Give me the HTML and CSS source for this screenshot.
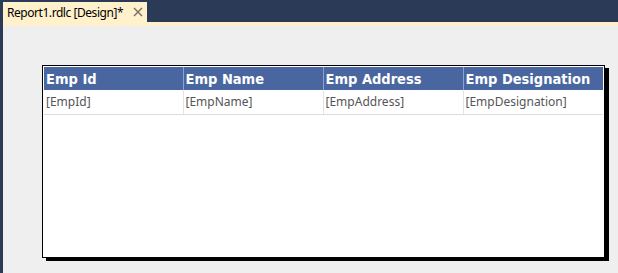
FILE: index.html
```html
<!DOCTYPE html>
<html lang="en">
  <head>
    <meta charset="UTF-8" />
    <meta name="viewport" content="width=device-width, initial-scale=1.0" />
    <title>Report1.rdlc [Design]</title>
    <link rel="stylesheet" href="styles.css">
  </head>
  <body>
    <div class="window">
      <div class="tabstrip">
        <div class="tab">
          <span class="tab-title">Report1.rdlc [Design]*</span>
          <svg class="tab-close" width="10" height="10" viewBox="0 0 10 10">
            <path d="M1 1 L9 9 M9 1 L1 9" stroke="#7b7563" stroke-width="1.5" fill="none" />
          </svg>
        </div>
      </div>

      <div class="designer">
        <div class="report-body">
          <table class="report-table">
            <tr class="head">
              <th>Emp Id</th>
              <th>Emp Name</th>
              <th>Emp Address</th>
              <th>Emp Designation</th>
            </tr>
            <tr class="detail">
              <td>[EmpId]</td>
              <td>[EmpName]</td>
              <td>[EmpAddress]</td>
              <td>[EmpDesignation]</td>
            </tr>
          </table>
        </div>
      </div>
    </div>
  </body>
</html>
```

FILE: styles.css
```css
* {
  margin: 0;
  padding: 0;
  box-sizing: border-box;
}
body {
  font-family: "Noto Sans", "Open Sans", sans-serif;
  background-color: #2a3a57;
}

.window {
  height: 273px;
  padding-left: 3px;
  display: flex;
  flex-direction: column;
}

.tabstrip {
  height: 22px;
  padding-top: 2px;
  display: flex;
}

.tab {
  width: 144px;
  background-color: #fef1cb;
  display: flex;
  align-items: center;
  padding-left: 4px;
  gap: 10px;
}

.tab-title {
  font-size: 12px;
  color: #000;
  letter-spacing: -0.45px;
}

.designer {
  flex: 1;
  background-color: #efefef;
  border-top: 4px solid #fef1cb;
  padding: 39px 0 0 39px;
}

.report-body {
  width: 563px;
  height: 193px;
  background-color: #fff;
  border: 1px solid #000;
  box-shadow: 4px 3px 0 #000;
  padding: 1px;
}

.report-table {
  border-collapse: collapse;
  table-layout: fixed;
  width: 559px;
}

.report-table th,
.report-table td {
  width: 140px;
  text-align: left;
  padding-left: 2px;
  white-space: nowrap;
  overflow: hidden;
}

.report-table th:first-child,
.report-table td:first-child {
  width: 139px;
}

.head th {
  height: 23px;
  background-color: #4a66a0;
  color: #fff;
  font-family: "DejaVu Sans Condensed", "DejaVu Sans", sans-serif;
  font-size: 14.5px;
  font-weight: bold;
  border-left: 1px solid #8aa2d2;
}

.detail td {
  height: 24px;
  font-size: 12px;
  color: #555;
  border-left: 1px solid #e4e4e4;
  border-bottom: 1px solid #dcdcdc;
}

.head th:first-child,
.detail td:first-child {
  border-left: none;
}
```
